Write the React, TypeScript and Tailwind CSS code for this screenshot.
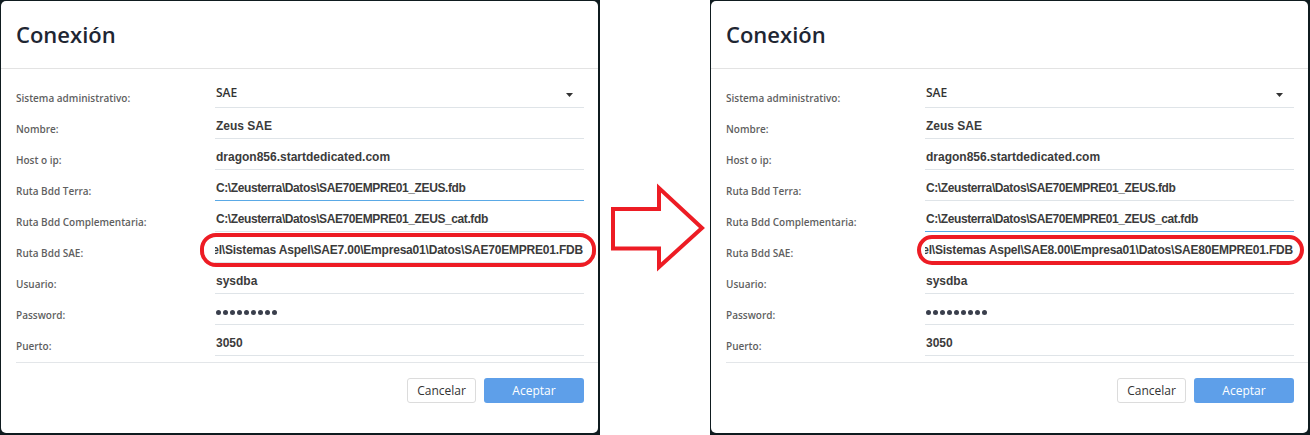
import React from "react";

const sans = "font-['Open_Sans','Noto_Sans',sans-serif]";
const arial = "font-['Liberation_Sans',Arial,sans-serif]";

type Field = { label: string; value?: string; kind?: "select" | "password" | "scroll" | "path" };

const fields = (version: "7" | "8"): Field[] => [
  { label: "Sistema administrativo:", value: "SAE", kind: "select" },
  { label: "Nombre:", value: "Zeus SAE" },
  { label: "Host o ip:", value: "dragon856.startdedicated.com" },
  { label: "Ruta Bdd Terra:", value: "C:\\Zeusterra\\Datos\\SAE70EMPRE01_ZEUS.fdb", kind: "path" },
  { label: "Ruta Bdd Complementaria:", value: "C:\\Zeusterra\\Datos\\SAE70EMPRE01_ZEUS_cat.fdb", kind: "path" },
  {
    label: "Ruta Bdd SAE:",
    value: `C:\\Program Files (x86)\\Common Files\\Aspel\\Sistemas Aspel\\SAE${version}.00\\Empresa01\\Datos\\SAE${version}0EMPRE01.FDB`,
    kind: "scroll",
  },
  { label: "Usuario:", value: "sysdba" },
  { label: "Password:", kind: "password" },
  { label: "Puerto:", value: "3050" },
];

function Row({ field, focused }: { field: Field; focused: boolean }) {
  return (
    <div className="flex h-[31px] items-end">
      <div className={`w-[199px] pb-[3px] text-[10px] leading-[14px] font-semibold text-[#5f5f5f] ${sans}`}>{field.label}</div>
      <div className={`relative flex h-full w-[369px] items-end border-b ${focused ? "border-[#5aa9e6]" : "border-[#dfe4e8]"}`}>
        {field.kind === "select" ? (
          <>
            <span className={`pb-[6px] pl-px text-[12px] leading-[16px] font-semibold text-[#333] ${sans}`}>{field.value}</span>
            <svg className="absolute right-[11px] bottom-[10px]" width="7" height="4" viewBox="0 0 7 4">
              <path d="M0 0h7L3.5 4z" fill="#333" />
            </svg>
          </>
        ) : field.kind === "password" ? (
          <div className="flex gap-[2px] pb-[9px] pl-px">
            {Array.from({ length: 9 }).map((_, i) => (
              <span key={i} className="size-[5px] rounded-full bg-[#3a3f4c]" />
            ))}
          </div>
        ) : field.kind === "scroll" ? (
          <div className="flex w-full justify-end overflow-hidden pb-[4px] pr-px">
            <span className={`shrink-0 whitespace-nowrap text-[12px] leading-[16px] font-bold tracking-[-0.2px] text-[#3b3b3b] ${arial}`}>{field.value}</span>
          </div>
        ) : (
          <span className={`whitespace-nowrap pb-[4px] pl-px text-[12px] leading-[16px] font-bold text-[#3b3b3b] ${field.kind === "path" ? "tracking-[-0.4px]" : ""} ${arial}`}>{field.value}</span>
        )}
      </div>
    </div>
  );
}

function Dialog({ version, focus, ring }: { version: "7" | "8"; focus: number; ring: string }) {
  return (
    <div className="relative h-[435px] w-[600px] shrink-0 bg-[#0f1b1f] pt-px pr-[2px] pb-[2px] pl-px">
      <div className="flex h-full flex-col rounded-[5px] bg-white">
        <div className="h-[68px] border-b border-[#e3e3e3] pt-[18px] pl-[15px]">
          <h1 className={`text-[22px] leading-[30px] font-semibold text-[#1e2633] ${sans}`}>Conexión</h1>
        </div>
        <div className="ml-[15px] border-b border-[#e3e6e9] pt-[8px] pb-[6px]">
          {fields(version).map((f, i) => (
            <Row key={f.label} field={f} focused={i === focus} />
          ))}
        </div>
        <div className="flex justify-end gap-[8px] pt-[15px] pr-[14px]">
          <button type="button" className={`h-[25px] w-[69px] rounded-[3px] border border-[#dcdcdc] bg-white text-[12px] text-[#333] ${sans}`}>Cancelar</button>
          <button type="button" className={`h-[25px] w-[100px] rounded-[3px] bg-[#5e9fe9] text-[12px] text-white ${sans}`}>Aceptar</button>
        </div>
      </div>
      <div className={`pointer-events-none absolute rounded-[16px] border-[4px] border-[#ed1c24] ${ring}`} />
    </div>
  );
}

export default function App() {
  return (
    <div className="flex h-[435px] w-[1310px] overflow-hidden bg-white">
      <Dialog version="7" focus={3} ring="left-[200px] top-[233px] h-[34px] w-[396px]" />
      <div className="w-[110px] shrink-0">
        <svg width="110" height="435" viewBox="0 0 110 435">
          <path d="M13 209H59V188L102 228L59 267V248.5H13Z" fill="none" stroke="#ed1c24" strokeWidth="4" strokeLinejoin="miter" />
        </svg>
      </div>
      <Dialog version="8" focus={4} ring="left-[207px] top-[235px] h-[30px] w-[387px]" />
    </div>
  );
}
